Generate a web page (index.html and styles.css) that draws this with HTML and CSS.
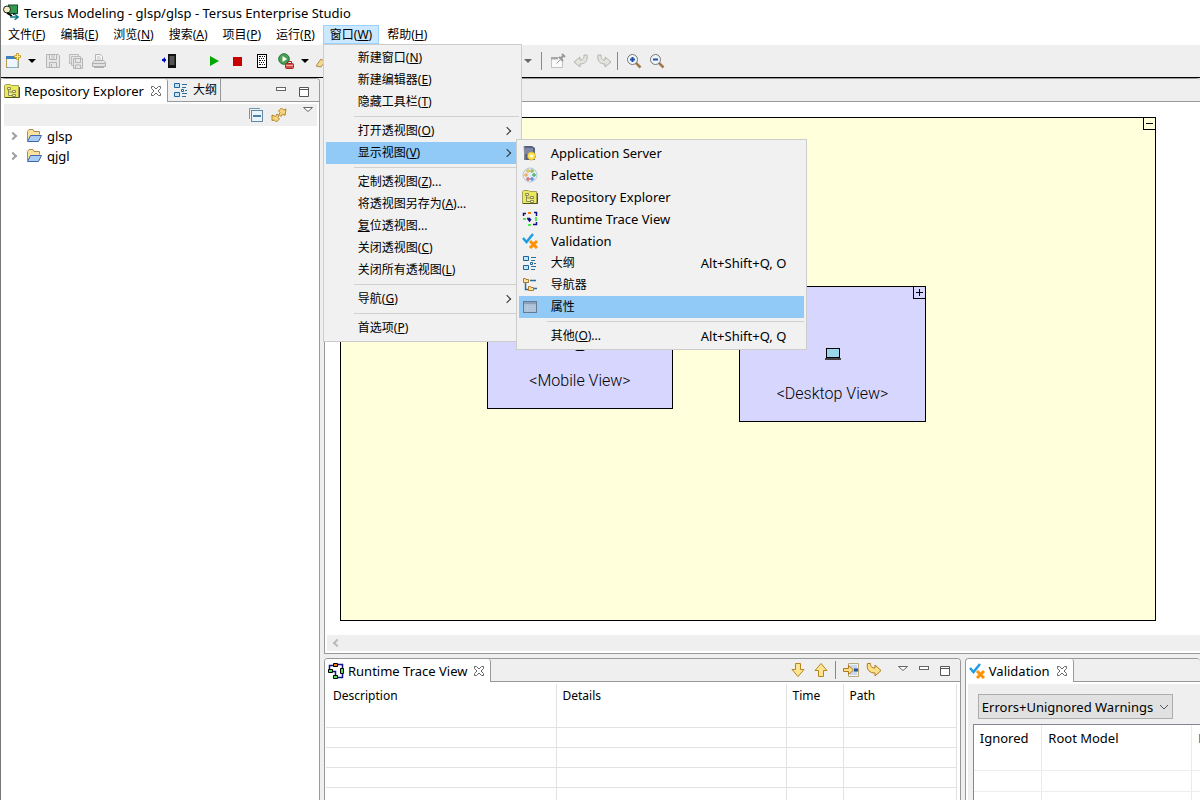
FILE: index.html
```html
<!DOCTYPE html>
<html lang="zh-CN">
<head>
<meta charset="utf-8">
<title>Tersus Modeling - glsp/glsp - Tersus Enterprise Studio</title>
<link rel="stylesheet" href="styles.css">
</head>
<body>
<svg class="defs" aria-hidden="true">
  <symbol id="i-app" viewBox="0 0 16 16"><rect x="5.500" y="1" width="9" height="8.500" fill="#2f9a50" stroke="#174a2a"/><circle cx="4" cy="5.500" r="3.500" fill="#f3ecc0" stroke="#222"/><path d="M4 9l5 3M11 9v2" stroke="#000" stroke-width="1.500" fill="none"/><path d="M7 13h7M11.500 10l3.500 3-3.500 3" stroke="#117a80" stroke-width="1.500" fill="none"/></symbol>
  <symbol id="i-new" viewBox="0 0 16 16"><rect x="1.500" y="3.500" width="12" height="11" fill="#eef6fd" stroke="#b79a50"/><path d="M1 3h10v3H1z" fill="#3e80c0"/><path d="M3 14.500h10V8" stroke="#7eb0dc" fill="none"/><path d="M12.500 0v7M9 3.500h7" stroke="#c99a20" stroke-width="2.500"/><path d="M12.500 1v5M10 3.500h5" stroke="#fff3a0"/></symbol>
  <symbol id="i-save" viewBox="0 0 16 16"><path d="M1.500 1.500h12l1 1v12h-13zM4.500 1.500v5h7v-5M4.500 14.500v-5h7v5M6.500 11v3M6 3h4M6 5h4" fill="#e6e6e6" stroke="#b5b5b5"/></symbol>
  <symbol id="i-saveall" viewBox="0 0 16 16"><path d="M1.500 1.500h9v9h-9z" fill="#e8e8e8" stroke="#bbb"/><path d="M3.500 3.500h9v9h-9z" fill="#e8e8e8" stroke="#bbb"/><path d="M5.500 5.500h9v10h-9zM7.500 5.500v4h5v-4M7.500 15v-3h5v3" fill="#e6e6e6" stroke="#b5b5b5"/></symbol>
  <symbol id="i-print" viewBox="0 0 16 16"><path d="M4.500 8V1.500h5l2 2V8" fill="#f4f4f4" stroke="#b5b5b5"/><path d="M6 4h3M6 6h4" stroke="#c4c4c4"/><path d="M1.500 13.500v-4l2-2h9l2 2v4zM1.500 10.500h13M3 14.500h10" fill="#e2e2e2" stroke="#b0b0b0"/></symbol>
  <symbol id="i-device" viewBox="0 0 16 16"><path d="M7 1h8v14H7z" fill="#111"/><path d="M8.500 3h5v9h-5z" fill="#555"/><path d="M1 7h4" stroke="#0010d0" stroke-width="2"/><path d="M4 4v6L1 7z" fill="#0010d0"/></symbol>
  <symbol id="i-play" viewBox="0 0 16 16"><path d="M4 3l9 5-9 5z" fill="#00a800"/></symbol>
  <symbol id="i-stop" viewBox="0 0 16 16"><path d="M3 4h9v9H3z" fill="#c80000"/></symbol>
  <symbol id="i-log" viewBox="0 0 16 16"><rect x="3.500" y="1.500" width="9" height="13" fill="#fff" stroke="#000"/><path d="M5 3.500h6M5 7.500h6M5 11.500h6" stroke="#111" stroke-dasharray="2 1 1 1"/><path d="M5 5.500h6M5 9.500h6" stroke="#111" stroke-dasharray="1 1"/></symbol>
  <symbol id="i-runext" viewBox="0 0 16 16"><circle cx="6" cy="6" r="5.300" fill="#4ba055" stroke="#25733a"/><path d="M4.500 3l4.500 3-4.500 3z" fill="#fff"/><rect x="7.500" y="10.500" width="8" height="5" rx="1" fill="#d45048" stroke="#a52a25"/><path d="M9.500 10V8.500h4V10" stroke="#a52a25" fill="none"/><path d="M8 12.500h7" stroke="#f3b0a8"/></symbol>
  <symbol id="i-pen" viewBox="0 0 16 16"><path d="M1 13l5-7 4 3-4 5z" fill="#f0d890" stroke="#b08a50"/></symbol>
  <symbol id="i-pin" viewBox="0 0 16 16"><path d="M1.500 4.500h11v10h-11z" fill="#fafafa" stroke="#c2c2c2"/><path d="M1 4h7v2.500H1z" fill="#a8a8a8"/><path d="M6.500 10.500l4-4" stroke="#999"/><path d="M9 4l4 4M12 1l3 3M10.500 5.500l3-3" stroke="#999" stroke-width="2"/></symbol>
  <symbol id="i-back" viewBox="0 0 16 16"><path d="M1 9l6-5v3c3 0 4-1 4-5h3c1 6-2 9-7 9v3z" fill="#e4e4de" stroke="#b3b3ab"/></symbol>
  <symbol id="i-zin" viewBox="0 0 16 16"><path d="M10 10l4.500 4.500" stroke="#a07850" stroke-width="2.500"/><circle cx="6.500" cy="6.500" r="5" fill="#eef4fc" stroke="#777"/><path d="M4 6.500h5M6.500 4v5" stroke="#2450a0" stroke-width="2"/></symbol>
  <symbol id="i-zout" viewBox="0 0 16 16"><path d="M10 10l4.500 4.500" stroke="#a07850" stroke-width="2.500"/><circle cx="6.500" cy="6.500" r="5" fill="#eef4fc" stroke="#777"/><path d="M4 6.500h5" stroke="#2450a0" stroke-width="2"/></symbol>
  <symbol id="i-repo" viewBox="0 0 16 16"><path d="M.5 14.500v-12l1-1h5l1 1h7v12z" fill="#eaea5a" stroke="#a5a05a"/><path d="M1 14.500h14.500V4" stroke="#555520" fill="none"/><path d="M3.500 4.500h3v2h-3zM4.500 7v5.500H8M4.500 9H8M8.500 7.500h3v2h-3zM8.500 11.500h3v2h-3z" fill="#f4f4b4" stroke="#8b8b58"/></symbol>
  <symbol id="i-outline" viewBox="0 0 16 16"><path d="M1.500 1.500h5v4h-5zM1.500 10.500h5v4h-5z" fill="#c4e6fb" stroke="#1c659c"/><path d="M9 2.500h5M9 5.500h4M12 8.500h2M9 11.500h5M9 14.500h4" stroke="#2b6f9f"/><path d="M8.500 7.500h2v2h-2z" fill="#fff" stroke="#1c659c"/></symbol>
  <symbol id="i-folder" viewBox="0 0 16 16"><path d="M1.500 12.500v-9l1.500-2h4l1 2h5.500v3" fill="#fbe2a0" stroke="#b58a4a"/><path d="M1.500 13.500l3-6h11l-3 6z" fill="#a9cdf2" stroke="#3f68ae"/></symbol>
  <symbol id="i-collapse" viewBox="0 0 16 16"><path d="M1.500 12V1.500H12" fill="none" stroke="#6c99b4"/><rect x="3.500" y="3.500" width="11" height="11" fill="#e9f5fd" stroke="#6288a5"/><path d="M5 9h8" stroke="#1a5490" stroke-width="1.500"/></symbol>
  <symbol id="i-link" viewBox="0 0 16 16"><path d="M10.500 1l-3 3 1.500 1.500-1 2 2 2 1.500-2.500 2.500 1.500 1-6.500-2.500 1z" fill="#f7d77a" stroke="#a8781e" stroke-width=".9"/><path d="M5.500 15l3-3L7 10.500l1-2-2-1.500-1.500 2.500L1 8v5.500l2.500-.500z" fill="#f7d77a" stroke="#a8781e" stroke-width=".9"/></symbol>
  <symbol id="i-close" viewBox="0 0 12 12"><path d="M1.500 1.500h2L6 4l2.500-2.500h2v2L8 6l2.500 2.500v2h-2L6 8l-2.500 2.500h-2v-2L4 6 1.500 3.500z" fill="#fff" stroke="#666"/></symbol>
  <symbol id="i-min" viewBox="0 0 12 12"><rect x="1.500" y="1.500" width="9" height="3" fill="#fff" stroke="#666"/></symbol>
  <symbol id="i-max" viewBox="0 0 12 12"><path d="M1.500 1.500h9v9h-9zM1.500 3.500h9" fill="#fff" stroke="#555"/></symbol>
  <symbol id="i-tri" viewBox="0 0 12 12"><path d="M1.500 1.500h9L6 5.500z" fill="#fff" stroke="#666"/></symbol>
  <symbol id="i-caret" viewBox="0 0 16 16"><path d="M4 6h8l-4 4z" fill="currentColor"/></symbol>
  <symbol id="i-server" viewBox="0 0 16 16"><path d="M2 1h8l3 2v12H2z" fill="#555f80"/><path d="M3 4h8M3 6h8M3 8h5" stroke="#a6b0cc"/><path d="M2 1l1 14" stroke="#999"/><circle cx="9.500" cy="11" r="4" fill="#ffe44a" stroke="#d39b10" stroke-dasharray="2 1"/><circle cx="9.500" cy="11" r="1.500" fill="#fff"/></symbol>
  <symbol id="i-palette" viewBox="0 0 16 16"><circle cx="8" cy="8" r="7" fill="#e3edf6" stroke="#b4c8da"/><g fill="#fff" stroke-width="1"><circle cx="6" cy="4" r="1.200" stroke="#e0a000"/><circle cx="10" cy="4" r="1.200" stroke="#7aa000"/><circle cx="4" cy="8" r="1.200" stroke="#f09010"/><circle cx="12" cy="8" r="1.200" stroke="#109030"/><circle cx="6" cy="12" r="1.200" stroke="#d03030"/><circle cx="10" cy="12" r="1.200" stroke="#2060c0"/></g></symbol>
  <symbol id="i-trace" viewBox="0 0 16 16"><path d="M1.500 5V2.500H4M12 1.500h2.500V5M14.500 11v2.500H11M5 7.500h2.500V10M2 2.500h2M6 8l1.500 2L9 8" stroke="#10108c" stroke-width="1.500" fill="none"/><path d="M6 1h3v2H6z" fill="#f08010"/><path d="M1 7h3v2H1zM13 6h2v4h-2zM6 13h3v2H6z" fill="#50e850"/></symbol>
  <symbol id="i-traceb" viewBox="0 0 16 16"><path d="M1.500 7V2.500H5M10 1.500h4.500V6M14.500 11v3.500H10M4 8.500h3.500V13" stroke="#10108c" stroke-width="1.500" fill="none"/><path d="M5.500.5h4v3h-4z" fill="#f08010" stroke="#000"/><path d="M.5 6.500h4v3h-4zM12.500 5.500h3v5h-3zM5.500 12.500h4v3h-4z" fill="#50e850" stroke="#000"/></symbol>
  <symbol id="i-valid" viewBox="0 0 16 16"><path d="M1 5l3.500 4L11 1" fill="none" stroke="#1e9de3" stroke-width="2.500"/><path d="M8 8l7 7M15 8l-7 7" stroke="#ff9000" stroke-width="3"/></symbol>
  <symbol id="i-nav" viewBox="0 0 16 16"><path d="M3.500 6v6.500H6M8 3.500h6M12 11.500h3" stroke="#2b6f9f" fill="none" stroke-width="1.500"/><path d="M1.500 5.500v-4h2l.5 1h2.500v3zM6.500 13.500v-4h2l.5 1h2.500v3z" fill="#fbe0a0" stroke="#b07828"/></symbol>
  <symbol id="i-props" viewBox="0 0 16 16"><rect x="1.500" y="2.500" width="13" height="11" fill="#a7bfd9" stroke="#667b93"/><path d="M2 4h12" stroke="#70849e"/><path d="M2 7.500h12M2 9.500h12M2 11.500h12M5.500 5v8" stroke="#b8c8d8"/></symbol>
  <symbol id="i-down" viewBox="0 0 16 16"><path d="M5.500 1.500h5v6h3.500l-6 7-6-7h3.500z" fill="#fde48e" stroke="#b98420"/></symbol>
  <symbol id="i-up" viewBox="0 0 16 16"><path d="M5.500 14.500h5v-6h3.500l-6-7-6 7h3.500z" fill="#fde48e" stroke="#b98420"/></symbol>
  <symbol id="i-goto" viewBox="0 0 16 16"><path d="M5.500 1.500h10v13h-10z" fill="#eef3fa" stroke="#b8ab78"/><path d="M7 4h7M7 6h7M7 10h7M7 12h7" stroke="#a4b9dd"/><path d="M11 8h4" stroke="#2457a0" stroke-width="3"/><path d="M.5 6.500h5v-3l5 4.500-5 4.500v-3h-5z" fill="#fde08a" stroke="#b07818"/></symbol>
  <symbol id="i-step" viewBox="0 0 16 16"><path d="M1.500 1.500h3c0 3 1 4.500 4.500 4.500V3l6 5.500-6 5.500v-3C4 11 0 8 1.500 1.500z" fill="#fde08a" stroke="#b07818"/></symbol>
  <symbol id="i-laptop" viewBox="0 0 16 12"><rect x="1.500" y=".5" width="13" height="9" fill="#98d8ea" stroke="#000"/><path d="M0 11h16" stroke="#444" stroke-width="2"/></symbol>
  <symbol id="i-phone" viewBox="0 0 10 16"><rect x=".5" y=".5" width="9" height="15" rx="1" fill="#98d8ea" stroke="#000"/></symbol>
</svg>

<div class="window">
  <header class="titlebar"><svg class="ic"><use href="#i-app"/></svg><span>Tersus Modeling - glsp/glsp - Tersus Enterprise Studio</span></header>

  <nav class="menubar">
    <button>文件(<u>F</u>)</button>
    <button>编辑(<u>E</u>)</button>
    <button>浏览(<u>N</u>)</button>
    <button>搜索(<u>A</u>)</button>
    <button>项目(<u>P</u>)</button>
    <button>运行(<u>R</u>)</button>
    <div class="anchor">
      <button class="open">窗口(<u>W</u>)</button>
      <div class="menu main-menu">
        <button>新建窗口(<u>N</u>)</button>
        <button>新建编辑器(<u>E</u>)</button>
        <button>隐藏工具栏(<u>T</u>)</button>
        <hr>
        <button class="more">打开透视图(<u>O</u>)</button>
        <div class="anchor">
          <button class="more selected">显示视图(<u>V</u>)</button>
          <div class="menu sub-menu">
            <button class="latin"><svg class="ic"><use href="#i-server"/></svg>Application Server</button>
            <button class="latin"><svg class="ic"><use href="#i-palette"/></svg>Palette</button>
            <button class="latin"><svg class="ic"><use href="#i-repo"/></svg>Repository Explorer</button>
            <button class="latin"><svg class="ic"><use href="#i-trace"/></svg>Runtime Trace View</button>
            <button class="latin"><svg class="ic"><use href="#i-valid"/></svg>Validation</button>
            <button><svg class="ic"><use href="#i-outline"/></svg>大纲<kbd>Alt+Shift+Q, O</kbd></button>
            <button><svg class="ic"><use href="#i-nav"/></svg>导航器</button>
            <button class="selected"><svg class="ic"><use href="#i-props"/></svg>属性</button>
            <hr>
            <button>其他(<u>O</u>)...<kbd>Alt+Shift+Q, Q</kbd></button>
          </div>
        </div>
        <hr>
        <button>定制透视图(<u>Z</u>)...</button>
        <button>将透视图另存为(<u>A</u>)...</button>
        <button><u>复</u>位透视图...</button>
        <button>关闭透视图(<u>C</u>)</button>
        <button>关闭所有透视图(<u>L</u>)</button>
        <hr>
        <button class="more">导航(<u>G</u>)</button>
        <hr>
        <button>首选项(<u>P</u>)</button>
      </div>
    </div>
    <button>帮助(<u>H</u>)</button>
  </nav>

  <div class="toolbar">
    <div class="tools">
      <button class="drop" aria-label="New"><svg class="ic"><use href="#i-new"/></svg><svg class="ic"><use href="#i-caret"/></svg></button>
      <button aria-label="Save"><svg class="ic"><use href="#i-save"/></svg></button>
      <button aria-label="Save all"><svg class="ic"><use href="#i-saveall"/></svg></button>
      <button aria-label="Print"><svg class="ic"><use href="#i-print"/></svg></button>
    </div>
    <div class="tools device"><button aria-label="Device"><svg class="ic"><use href="#i-device"/></svg></button></div>
    <div class="tools run">
      <button aria-label="Start"><svg class="ic"><use href="#i-play"/></svg></button>
      <button aria-label="Stop"><svg class="ic"><use href="#i-stop"/></svg></button>
      <button aria-label="Log"><svg class="ic"><use href="#i-log"/></svg></button>
      <button class="drop" aria-label="External tools"><svg class="ic"><use href="#i-runext"/></svg><svg class="ic"><use href="#i-caret"/></svg></button>
      <button aria-label="Edit"><svg class="ic"><use href="#i-pen"/></svg></button>
    </div>
    <div class="tools history">
      <button class="dim" aria-label="More"><svg class="ic"><use href="#i-caret"/></svg></button>
      <i class="rule"></i>
      <button aria-label="Pin"><svg class="ic"><use href="#i-pin"/></svg></button>
      <button aria-label="Back"><svg class="ic"><use href="#i-back"/></svg></button>
      <button aria-label="Forward"><svg class="ic flip"><use href="#i-back"/></svg></button>
      <i class="rule"></i>
      <button aria-label="Zoom in"><svg class="ic"><use href="#i-zin"/></svg></button>
      <button aria-label="Zoom out"><svg class="ic"><use href="#i-zout"/></svg></button>
    </div>
  </div>

  <main class="workspace">
    <aside class="panel explorer">
      <div class="tabs">
        <div class="tab active"><svg class="ic"><use href="#i-repo"/></svg><span>Repository Explorer</span><button aria-label="Close"><svg class="sm"><use href="#i-close"/></svg></button></div>
        <div class="tab"><svg class="ic"><use href="#i-outline"/></svg><span>大纲</span></div>
        <div class="win-buttons"><button aria-label="Minimize"><svg class="sm"><use href="#i-min"/></svg></button><button aria-label="Maximize"><svg class="sm"><use href="#i-max"/></svg></button></div>
      </div>
      <div class="view-tools">
        <button aria-label="Collapse all"><svg class="ic"><use href="#i-collapse"/></svg></button>
        <button aria-label="Link"><svg class="ic"><use href="#i-link"/></svg></button>
        <button class="view-menu" aria-label="View menu"><svg class="sm"><use href="#i-tri"/></svg></button>
      </div>
      <ul class="tree">
        <li><i class="chev"></i><svg class="ic"><use href="#i-folder"/></svg><span>glsp</span></li>
        <li><i class="chev"></i><svg class="ic"><use href="#i-folder"/></svg><span>qjgl</span></li>
      </ul>
    </aside>

    <div class="right">
      <section class="panel editor">
        <div class="tabs"></div>
        <div class="sheet">
          <div class="canvas">
            <button class="corner" aria-label="Collapse"><svg viewBox="0 0 11 11"><path d="M2 5.500h7" stroke="#000"/></svg></button>
            <div class="node mobile"><svg class="phone"><use href="#i-phone"/></svg><span>&lt;Mobile View&gt;</span></div>
            <div class="node desktop">
              <button class="corner" aria-label="Expand"><svg viewBox="0 0 11 11"><path d="M2 5.500h7M5.500 2v7" stroke="#000"/></svg></button>
              <svg class="laptop"><use href="#i-laptop"/></svg><span>&lt;Desktop View&gt;</span>
            </div>
          </div>
        </div>
        <div class="scrollbar"><i class="chev left"></i></div>
      </section>

      <div class="bottom">
        <section class="panel trace">
          <div class="tabs">
            <div class="tab active"><svg class="ic"><use href="#i-traceb"/></svg><span>Runtime Trace View</span><button aria-label="Close"><svg class="sm"><use href="#i-close"/></svg></button></div>
            <div class="trace-tools">
              <button aria-label="Next"><svg class="ic"><use href="#i-down"/></svg></button>
              <button aria-label="Previous"><svg class="ic"><use href="#i-up"/></svg></button>
              <i class="rule"></i>
              <button aria-label="Go to"><svg class="ic"><use href="#i-goto"/></svg></button>
              <button aria-label="Step"><svg class="ic"><use href="#i-step"/></svg></button>
            </div>
            <div class="win-buttons"><button aria-label="View menu"><svg class="sm"><use href="#i-tri"/></svg></button><button aria-label="Minimize"><svg class="sm"><use href="#i-min"/></svg></button><button aria-label="Maximize"><svg class="sm"><use href="#i-max"/></svg></button></div>
          </div>
          <div class="table-box">
            <table class="trace-table">
              <colgroup><col class="c-desc"><col class="c-desc"><col class="c-time"><col></colgroup>
              <thead><tr><th>Description</th><th>Details</th><th>Time</th><th>Path</th></tr></thead>
              <tbody><tr><td></td><td></td><td></td><td></td></tr><tr><td></td><td></td><td></td><td></td></tr><tr><td></td><td></td><td></td><td></td></tr><tr><td></td><td></td><td></td><td></td></tr></tbody>
            </table>
          </div>
        </section>

        <section class="panel validation">
          <div class="tabs">
            <div class="tab active"><svg class="ic"><use href="#i-valid"/></svg><span>Validation</span><button aria-label="Close"><svg class="sm"><use href="#i-close"/></svg></button></div>
          </div>
          <div class="valid-body">
            <div class="picker"><select aria-label="Filter"><option>Errors+Unignored Warnings</option></select><svg class="down" viewBox="0 0 10 6"><path d="M1 1l4 4 4-4" fill="none" stroke="#555"/></svg></div>
            <div class="valid-box">
              <table class="valid-table">
                <colgroup><col class="c-ign"><col class="c-root"><col class="c-path"></colgroup>
                <thead><tr><th>Ignored</th><th>Root Model</th><th>Path</th></tr></thead>
                <tbody><tr><td></td><td></td><td></td></tr><tr><td></td><td></td><td></td></tr><tr><td></td><td></td><td></td></tr></tbody>
              </table>
            </div>
          </div>
        </section>
      </div>
    </div>
  </main>
</div>
</body>
</html>
```
FILE: styles.css
```css
* { box-sizing: border-box; }
html, body { height: 100%; margin: 0; }
body {
  overflow: hidden;
  background: #fff;
  color: #000;
  font: 12px/20px "Noto Sans", "Noto Sans CJK SC", sans-serif;
}
button {
  margin: 0;
  padding: 0;
  border: 0;
  background: none;
  color: inherit;
  font: inherit;
  white-space: nowrap;
}
u { text-underline-offset: 1px; }
.defs { display: none; }
.ic { display: block; flex: none; width: 16px; height: 16px; }
.sm { display: block; flex: none; width: 12px; height: 12px; }
.flip { transform: scaleX(-1); }

.window {
  display: flex;
  flex-direction: column;
  height: 100vh;
  border-left: 1px solid #777;
}
.titlebar {
  display: flex;
  flex: none;
  gap: 5px;
  height: 25px;
  padding: 4px 2px;
  font-size: 13px;
}
.titlebar span { line-height: 19px; }

/* Menus */
.menubar { display: flex; flex: none; gap: 1px; height: 20px; }
.menubar > button, .open { padding: 0 7px; height: 19px; line-height: 19px; }
.anchor { position: relative; }
.menubar .open { padding: 0 6px; border: 1px solid #99d1ff; background: #cce8ff; line-height: 17px; }
.menu {
  position: absolute;
  z-index: 5;
  padding: 2px;
  border: 1px solid #ccc;
  background: #f1f1f1;
}
.main-menu { top: 19px; left: 0; width: 199px; }
.sub-menu { top: -3px; left: 190px; width: 291px; z-index: 6; }
.menu button {
  display: flex;
  align-items: center;
  width: 100%;
  height: 22px;
  padding-left: 32px;
}
.menu .latin, .menu kbd { font-size: 13px; }
.menu button > u { white-space: pre; }
.menu .sub-menu button .ic { margin: 0 13px 0 -29px; }
.menu hr {
  height: 1px;
  margin: 3px 0 3px 28px;
  border: 0;
  background: #d0d0d0;
}
.menu .selected { background: #91c9f7; }
.more::after {
  content: "";
  width: 5px;
  height: 5px;
  margin: 0 9px 0 auto;
  border: solid #333;
  border-width: 1px 1px 0 0;
  transform: rotate(45deg);
}
.menu kbd { width: 86px; margin: 0 17px 0 auto; font-family: inherit; text-align: left; }

/* Main toolbar */
.toolbar {
  display: flex;
  flex: none;
  align-items: center;
  height: 33px;
  padding-left: 4px;
  border-bottom: 1px solid #000;
  background: #efefef;
}
.tools { display: flex; align-items: center; gap: 7px; }
.drop { display: flex; gap: 3px; }
.drop + button { margin-left: -2px; }
.device { margin-left: 54px; }
.run { margin-left: 29px; gap: 8px; }
.run .drop + button { margin-left: -6px; }
.history { margin-left: 189px; }
.history .rule { margin: 0 0 0 -2px; }
.dim { color: #666; }
.rule { width: 2px; height: 18px; border-left: 1px solid #888; }

/* Panels */
.workspace { display: flex; flex: 1; min-height: 0; background: #efefef; gap: 4px; }
.panel {
  display: flex;
  flex-direction: column;
  min-width: 0;
  border: 1px solid #999;
  border-radius: 4px 4px 0 0;
  border-bottom: 0;
  background: #fff;
}
.tabs {
  display: flex;
  flex: none;
  height: 23px;
  border-bottom: 1px solid #999;
  border-radius: 3px 3px 0 0;
  background: #efefef;
}
.tab {
  display: flex;
  align-items: center;
  gap: 4px;
  height: 22px;
  padding: 0 3px 0 5px;
  border-right: 1px solid #999;
}
.tab.active {
  height: 23px;
  padding: 0 5px 0 3px;
  border-radius: 3px 3px 0 0;
  background: #fff;
  font-size: 13px;
}
.tab button { margin-left: 2px; }
.win-buttons { display: flex; gap: 11px; margin: 4px 9px 0 auto; }
.explorer { flex: none; width: 319px; border-left: 0; }
.view-tools {
  display: flex;
  flex: none;
  gap: 7px;
  justify-content: flex-end;
  align-items: center;
  height: 22px;
  margin: 2px 2px 0 3px;
  padding-right: 3px;
  background: #efefef;
}
.view-menu { margin: 0 0 6px 8px; }
.tree { margin: 0; padding: 0 10px; font-size: 13px; list-style: none; }
.tree li { display: flex; align-items: center; gap: 5px; height: 20px; }
.chev {
  width: 6px;
  height: 6px;
  margin: 0 5px 0 -1px;
  border: solid #a0a0a0;
  border-width: 2px 2px 0 0;
  transform: rotate(45deg);
}
.chev.left { margin: 0 0 0 7px; transform: rotate(-135deg); border-color: #bbb; }
.right { display: flex; flex: 1; flex-direction: column; gap: 4px; min-width: 0; }
.editor { flex: 1; border-right: 0; border-bottom: 1px solid #999; }
.sheet { display: flex; flex: 1; min-height: 0; padding: 15px 44px 14px 15px; }
.canvas { position: relative; flex: 1; border: 1px solid #000; background: #ffffdc; }
.corner {
  position: absolute;
  top: -1px;
  right: -1px;
  width: 13px;
  height: 13px;
  border: 1px solid #000;
}
.corner svg { display: block; width: 11px; height: 11px; }
.node {
  position: absolute;
  display: flex;
  flex-direction: column;
  align-items: center;
  justify-content: flex-end;
  border: 1px solid #000;
  background: #d6d6ff;
  font-family: Roboto, "Liberation Sans", sans-serif;
  font-size: 16px;
  font-weight: 300;
}
.mobile { top: 168px; left: 146px; width: 186px; height: 123px; padding-bottom: 17px; gap: 20px; }
.desktop { top: 168px; left: 398px; width: 187px; height: 136px; padding-bottom: 17px; gap: 24px; }
.laptop { width: 16px; height: 12px; }
.phone { width: 10px; height: 16px; }
.scrollbar { display: flex; flex: none; align-items: center; height: 16px; margin: 0 0 2px 2px; background: #efefef; }

.bottom { display: flex; flex: none; gap: 4px; height: 142px; }
.trace { flex: 637; }
.validation { flex: 235; border-right: 0; overflow: hidden; }
.trace-tools { display: flex; align-items: center; gap: 7px; margin-left: auto; }
.trace-tools .rule { margin: 0 -1px; }
.trace .win-buttons { margin: 2px 9px 0 15px; gap: 9px; }

table { border-collapse: collapse; table-layout: fixed; width: 100%; }
th { padding: 2px 6px; font-weight: normal; text-align: left; vertical-align: top; }
.table-box { margin: 2px 3px 0 1px; overflow: hidden; }
.trace-table th, .trace-table td { border-right: 1px solid #e2e2e2; border-bottom: 1px solid #e2e2e2; }
.trace-table th { height: 43px; }
.trace-table th:first-child { padding-left: 7px; }
.trace-table td { height: 20px; }
.c-desc { width: 230px; }
.c-time { width: 57px; }

.valid-body { display: flex; flex: 1; flex-direction: column; min-height: 0; margin: 2px 0 0 2px; padding: 10px 0 0 5px; background: #efefef; }
.picker { position: relative; width: 195px; margin-left: 5px; }
.picker select {
  display: block;
  appearance: none;
  width: 100%;
  height: 25px;
  padding: 0 3px;
  border: 1px solid #adadad;
  border-radius: 0;
  background: #e1e1e1;
  color: inherit;
  font: inherit;
  font-size: 13px;
}
.down { position: absolute; top: 10px; right: 4px; width: 10px; height: 6px; pointer-events: none; }
.valid-box { flex: 1; margin-top: 5px; border: solid #828790; border-width: 1px 0 0 1px; background: #fff; overflow: hidden; }
.valid-table { width: 300px; font-size: 13px; }
.valid-table th, .valid-table td { border-right: 1px solid #e8ecf0; border-bottom: 1px solid #eee; }
.valid-table th { height: 45px; padding: 3px 6px; }
.valid-table td { height: 21px; }
.c-ign { width: 68px; }
.c-root { width: 150px; }
```
